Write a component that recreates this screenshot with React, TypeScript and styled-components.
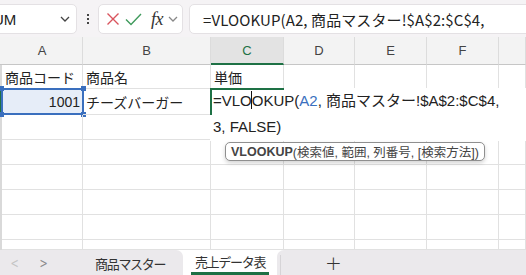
import React from "react";
import styled, { createGlobalStyle } from "styled-components";

const GlobalStyle = createGlobalStyle`
  html, body { margin: 0; padding: 0; background: #ffffff; }
  body {
    width: 526px;
    height: 275px;
    overflow: hidden;
    font-family: "Liberation Sans", "Noto Sans CJK JP", sans-serif;
    color: #222;
  }
`;

const GREEN = "#1e7145";
const BLUE = "#3a6fbe";

const Window = styled.div`
  width: 526px;
  height: 275px;
  display: flex;
  flex-direction: column;
  overflow: hidden;
`;

/* ---------- formula toolbar ---------- */

const Toolbar = styled.div`
  flex: none;
  height: 37px;
  box-sizing: border-box;
  padding-top: 4px;
  display: flex;
  align-items: flex-start;
  background: #f5f3f5;
`;

const Box = styled.div`
  height: 30px;
  box-sizing: border-box;
  background: #ffffff;
  border: 1px solid #e4e1e4;
  border-radius: 5px;
  display: flex;
  align-items: center;
`;

const NameBox = styled(Box)`
  margin-left: -26px;
  width: 103px;
  padding: 0 6px 0 8px;
  justify-content: space-between;
  font-size: 15px;
  color: #222;
`;

const Dots = styled.div`
  width: 21px;
  height: 30px;
  display: flex;
  flex-direction: column;
  align-items: center;
  justify-content: center;
  gap: 2px;
  & span {
    width: 2px;
    height: 2px;
    background: #444;
  }
`;

const FuncBox = styled(Box)`
  width: 85px;
  padding: 0 4px 0 7px;
  justify-content: space-between;
`;

const Fx = styled.span`
  font-family: "Liberation Serif", serif;
  font-style: italic;
  font-size: 18px;
  color: #333;
  letter-spacing: -0.5px;
  margin-left: 4px;
`;

const FormulaBox = styled(Box)`
  flex: 1;
  margin-left: 6px;
  margin-right: -12px;
  padding-left: 13px;
  font-family: "Noto Sans CJK JP", sans-serif;
  font-size: 15px;
  letter-spacing: 0.1px;
  white-space: nowrap;
  overflow: hidden;
`;

const Chevron = ({ color = "#555" }: { color?: string }) => (
  <svg width="10" height="6" viewBox="0 0 10 6">
    <path d="M1 1 L5 5 L9 1" fill="none" stroke={color} strokeWidth="1.3" />
  </svg>
);

/* ---------- sheet grid ---------- */

const Sheet = styled.div`
  flex: 1;
  overflow: hidden;
  display: grid;
  grid-template-columns: 2px 81px 128px 73px 71px 72px 72px 1fr;
  grid-template-rows: 28px 24px 26px 25px 25px 25px 25px 25px 1fr;
`;

const RowHead = styled.div<{ $active?: boolean; $top?: boolean }>`
  background: ${({ $active, $top }) => ($active ? GREEN : $top ? "#f3f3f3" : "#d9d9d9")};
  border-bottom: ${({ $top }) => ($top ? "1px solid #c6c6c6" : "none")};
`;

const ColHead = styled.div<{ $active?: boolean }>`
  display: flex;
  align-items: center;
  justify-content: center;
  font-size: 13px;
  color: ${({ $active }) => ($active ? GREEN : "#444")};
  background: ${({ $active }) => ($active ? "#e3e3e3" : "#f3f3f3")};
  border-right: 1px solid #dcdcdc;
  border-bottom: ${({ $active }) => ($active ? `2px solid ${GREEN}` : "1px solid #c6c6c6")};
`;

const Cell = styled.div<{ $align?: "left" | "right" }>`
  position: relative;
  display: flex;
  align-items: center;
  justify-content: ${({ $align }) => ($align === "right" ? "flex-end" : "flex-start")};
  padding: 0 3px;
  font-size: 14px;
  white-space: nowrap;
  border-right: 1px solid #e1e1e1;
  border-bottom: 1px solid #e1e1e1;
  min-width: 0;
`;

const SelectedCell = styled(Cell)`
  background: #e6edf8;
  border: 2px solid ${BLUE};
  margin: -1px -1px 0 -1px;
  padding-right: 2px;
`;

const Handle = styled.span<{ $x: "l" | "r"; $y: "t" | "b" }>`
  position: absolute;
  width: 5px;
  height: 5px;
  background: ${BLUE};
  ${({ $x }) => ($x === "l" ? "left: -4px;" : "right: -4px;")}
  ${({ $y }) => ($y === "t" ? "top: -4px;" : "bottom: -4px;")}
`;

const EditBox = styled.div`
  position: absolute;
  z-index: 3;
  top: -1px;
  left: -1px;
  width: 316px;
  height: 53px;
  background: #ffffff;
  font-size: 15px;
  color: #222;
`;

const ActiveFrame = styled.div`
  position: absolute;
  top: 0;
  left: 0;
  width: 74px;
  height: 27px;
  border-top: 2px solid ${GREEN};
  border-left: 2px solid ${GREEN};
  box-sizing: border-box;
`;

const EditLine = styled.div`
  height: 26px;
  line-height: 26px;
  padding-left: 3px;
  white-space: nowrap;
`;

const Ref = styled.span`
  color: ${BLUE};
`;

const Caret = styled.span`
  display: inline-block;
  width: 1px;
  height: 18px;
  background: #111;
  vertical-align: -3px;
  margin: 0 -0.5px;
`;

const Tip = styled.div`
  position: absolute;
  top: 54px;
  left: 15px;
  height: 17px;
  padding: 0 5px;
  display: flex;
  align-items: center;
  white-space: nowrap;
  font-size: 12.5px;
  color: #444;
  background: #ffffff;
  border: 1px solid #8f8f8f;
  border-radius: 5px;
  box-shadow: 0 2px 4px rgba(0, 0, 0, 0.18);
  & b { font-weight: bold; color: #444; }
`;

/* ---------- sheet tabs ---------- */

const TabBar = styled.div`
  flex: none;
  height: 25px;
  display: flex;
  background: #ffffff;
`;

const Strip = styled.div<{ $side: "left" | "right" }>`
  background: #ebe9ec;
  display: flex;
  align-items: center;
  border-radius: ${({ $side }) => ($side === "left" ? "0 7px 0 0" : "7px 0 0 0")};
  ${({ $side }) => ($side === "left" ? "width: 183px;" : "flex: 1;")}
`;

const Nav = styled.span<{ $dim?: boolean }>`
  width: 29px;
  text-align: center;
  font-size: 14px;
  color: ${({ $dim }) => ($dim ? "#c4c4c4" : "#8a8a8a")};
  font-family: "DejaVu Sans", sans-serif;
  transform: scaleX(0.7);
`;

const TabLabel = styled.span`
  font-family: "Noto Sans CJK JP", sans-serif;
  font-size: 13px;
  letter-spacing: -1.3px;
  color: #333;
  padding-top: 2px;
`;

const ActiveTab = styled.div`
  width: 94px;
  display: flex;
  flex-direction: column;
  align-items: center;
  justify-content: flex-end;
  & span {
    padding: 0 4px 0;
    border-bottom: 3px solid ${GREEN};
    line-height: 20px;
  }
`;

const Sep = styled.div`
  width: 1px;
  height: 20px;
  align-self: flex-end;
  background: #d6d4d7;
  margin-left: 3px;
`;

const Plus = styled.span`
  margin-left: 44px;
  font-size: 20px;
  font-weight: 300;
  color: #333;
  font-family: "DejaVu Sans", sans-serif;
`;

const cols = ["A", "B", "C", "D", "E", "F", "G"];

export default function App() {
  const blanks = (n: number, from = 0) =>
    Array.from({ length: n }, (_, i) => <Cell key={`b${from + i}`} />);

  return (
    <Window>
      <GlobalStyle />
      <Toolbar>
        <NameBox>
          <span>SUM</span>
          <Chevron color="#444" />
        </NameBox>
        <Dots>
          <span />
          <span />
          <span />
        </Dots>
        <FuncBox>
          <svg width="14" height="14" viewBox="0 0 14 14">
            <path d="M1.5 1.5 L12.5 12.5 M12.5 1.5 L1.5 12.5" stroke="#d9545e" strokeWidth="1.4" fill="none" />
          </svg>
          <svg width="17" height="13" viewBox="0 0 17 13">
            <path d="M1 6.5 L6 11.5 L16 1" stroke="#3f9a5c" strokeWidth="1.4" fill="none" />
          </svg>
          <Fx>fx</Fx>
          <Chevron color="#888" />
        </FuncBox>
        <FormulaBox>=VLOOKUP(A2, 商品マスター!$A$2:$C$4,</FormulaBox>
      </Toolbar>

      <Sheet>
        <RowHead $top />
        {cols.map((c) => (
          <ColHead key={c} $active={c === "C"}>
            {c === "G" ? "" : c}
          </ColHead>
        ))}

        <RowHead />
        <Cell>商品コード</Cell>
        <Cell>商品名</Cell>
        <Cell>単価</Cell>
        {blanks(4, 10)}

        <RowHead $active />
        <SelectedCell $align="right">
          1001
          <Handle $x="l" $y="t" />
          <Handle $x="r" $y="t" />
          <Handle $x="l" $y="b" />
          <Handle $x="r" $y="b" />
        </SelectedCell>
        <Cell>チーズバーガー</Cell>
        <Cell>
          <EditBox>
            <ActiveFrame />
            <EditLine>
              =VLO<Caret />OKUP(<Ref>A2</Ref>, 商品マスター!$A$2:$C$4,
            </EditLine>
            <EditLine>3, FALSE)</EditLine>
            <Tip>
              <b>VLOOKUP</b>(検索値, 範囲, 列番号, [検索方法])
            </Tip>
          </EditBox>
        </Cell>
        {blanks(4, 20)}

        {[3, 4, 5, 6, 7, 8].map((r) => (
          <React.Fragment key={r}>
            <RowHead />
            {blanks(7, r * 10)}
          </React.Fragment>
        ))}
      </Sheet>

      <TabBar>
        <Strip $side="left">
          <Nav $dim>&lt;</Nav>
          <Nav>&gt;</Nav>
          <span style={{ width: 37 }} />
          <TabLabel>商品マスター</TabLabel>
        </Strip>
        <ActiveTab>
          <TabLabel>売上データ表</TabLabel>
        </ActiveTab>
        <Strip $side="right">
          <Sep />
          <Plus>+</Plus>
        </Strip>
      </TabBar>
    </Window>
  );
}
